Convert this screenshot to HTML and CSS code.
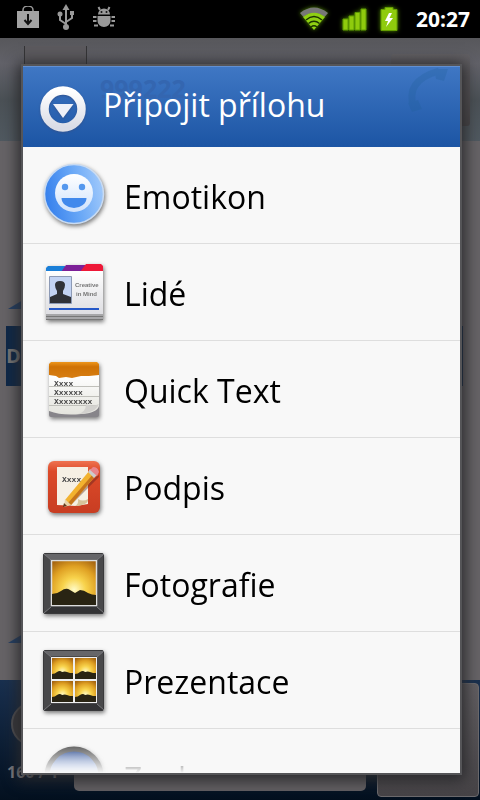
FILE: index.html
```html
<!DOCTYPE html>
<html lang="cs">
<head>
<meta charset="utf-8">
<meta name="viewport" content="width=device-width, initial-scale=1">
<title>Připojit přílohu</title>
<link rel="stylesheet" href="styles.css">
</head>
<body>
<header class="status">
  <div class="status-left">
    <svg width="24" height="24" viewBox="0 0 24 24" aria-hidden="true">
      <path d="M7 6V4a5 4 0 0 1 10 0v2" fill="none" stroke="#999" stroke-width="1.5"/>
      <path d="M1 5h22v17H1z" fill="#a3a3a3"/>
      <path d="M12 8v9M8.500 14l3.500 4 3.500-4" fill="none" stroke="#111" stroke-width="2"/>
    </svg>
    <svg width="24" height="28" viewBox="0 0 24 28" aria-hidden="true" fill="none" stroke="#999" stroke-width="2">
      <path d="M12 4v20M12 20l-6-4v-5M12 18l6-4V9"/>
      <path d="M12 0l3.500 6h-7z" fill="#999" stroke="none"/>
      <circle cx="12" cy="23" r="3" fill="#999" stroke="none"/>
      <circle cx="6" cy="10" r="2.500" fill="#999" stroke="none"/>
      <path d="M16 7h4v4h-4z" fill="#999" stroke="none"/>
    </svg>
    <svg width="24" height="24" viewBox="0 0 24 24" aria-hidden="true">
      <path d="M6 8.500a6 6 0 0 1 12 0zM5.500 10h13v5a6.500 6 0 0 1-13 0z" fill="#999"/>
      <path d="M8 4L6.500 1M16 4l1.500-3M1 11h3.500M1 15h3.500M2 19.500h4M19.500 11H23M19.500 15H23M18 19.500h4" stroke="#999" stroke-width="2"/>
      <circle cx="9.500" cy="6" r="1" fill="#111"/><circle cx="14.500" cy="6" r="1" fill="#111"/>
    </svg>
  </div>
  <div class="status-right">
    <svg width="32" height="26" viewBox="0 0 32 26" aria-hidden="true" fill="none">
      <path d="M2 7Q16-4 30 7L26.500 11Q16 3 5.500 11z" fill="#777"/>
      <path d="M5 11Q16 2.500 27 11L16 24z" fill="#8fd012"/>
      <path d="M8 14Q16 7 24 14M10.500 17.500q5.500-4.500 11 0M13 21q3-2.500 6 0" stroke="#1c3300" stroke-width="1.500"/>
    </svg>
    <svg width="26" height="26" viewBox="0 0 26 26" aria-hidden="true" fill="#8fcb0d" stroke="#5c9a00" stroke-width="1">
      <path d="M1 13h5v11H1zM7 10h5v14H7zM13 6.500h5V24h-5zM19 3h5v21h-5z"/>
    </svg>
    <svg class="battery" width="18" height="26" viewBox="0 0 18 26" aria-hidden="true">
      <path d="M5 1.500h8v2h4v21H1v-21h4z" fill="#8fcb0d" stroke="#639d00"/>
      <path d="M9 7L5 15h3l-2 6 7-9H9.500L12 7z" fill="#fff"/>
    </svg>
    <time class="clock">20:27</time>
  </div>
</header>
<main class="screen">
  <div class="chat">
    <div class="contact">
      <div class="avatar"></div>
      <div class="call"></div>
    </div>
    <div class="thread">
      <div class="bubble"><i class="tail"></i></div>
      <div class="day">D</div>
      <div class="bubble sent"><i class="tail"></i></div>
    </div>
    <div class="composer">
      <div class="tools">
        <div class="round"></div>
        <span class="count">160 / 1</span>
      </div>
      <div class="field"></div>
      <div class="send"></div>
    </div>
  </div>
  <section class="dialog" role="dialog" aria-labelledby="title">
    <div class="title">
      <svg class="title-icon" width="48" height="48" viewBox="0 0 48 48" aria-hidden="true">
        <defs><linearGradient id="ring" x2="0" y2="1"><stop stop-color="#fff"/><stop offset="1" stop-color="#d9dce6"/></linearGradient></defs>
        <circle cx="24" cy="24" r="18.500" fill="none" stroke="url(#ring)" stroke-width="8.500"/>
        <path d="M14 19h20.500L24 33z" fill="#eef1f8"/>
      </svg>
      <h1 id="title">Připojit přílohu</h1>
      <span class="ghost-number" aria-hidden="true">999222</span>
      <svg class="ghost-call" width="56" height="52" viewBox="0 0 56 52" aria-hidden="true"><path d="M14 41Q4 14 39 4" fill="none" stroke="#1f5e96" stroke-width="7"/><path d="M34 2l14 0-4 12-8-2zM8 36l10-3 4 9-10 3z" fill="#1f5e96"/></svg>
    </div>
    <ul class="list">
      <li><button class="item" type="button">
        <svg class="icon" viewBox="0 0 64 64" aria-hidden="true">
          <defs><linearGradient id="blue" x1="0" y1=".6" x2="1" y2=".4"><stop stop-color="#357fec"/><stop offset=".5" stop-color="#65a5f6"/><stop offset="1" stop-color="#a0c9fb"/></linearGradient>
          <linearGradient id="face" x2="0" y2="1"><stop stop-color="#fff"/><stop offset="1" stop-color="#cfe2fc"/></linearGradient></defs>
          <circle cx="32" cy="31" r="29.500" fill="url(#blue)" stroke="#c9dbf2" stroke-width="1.500"/>
          <circle cx="32" cy="30" r="19" fill="url(#face)"/>
          <circle cx="23" cy="24" r="3.200" fill="#5598ee"/><circle cx="40" cy="24" r="3.200" fill="#5598ee"/>
          <path d="M19.500 35h25a12.500 10 0 0 1-25 0z" fill="#4189ec"/>
        </svg><span>Emotikon</span></button></li>
      <li><button class="item" type="button">
        <svg class="icon" viewBox="0 0 64 64" aria-hidden="true">
          <defs><linearGradient id="card" x2="0" y2="1"><stop stop-color="#fff"/><stop offset="1" stop-color="#dedee2"/></linearGradient></defs>
          <path d="M4 11V8l2-2h17v6H4z" fill="#1a7fd8"/><path d="M19 12l5-7h20v7z" fill="#7d2098"/><path d="M38 12l6-8h15l2 2v6z" fill="#ee1838"/>
          <path d="M4 11h57v49H4z" fill="#a6a6a8"/><path d="M4 56.500h57M4 59.500h57" stroke="#777" />
          <path d="M4 11h57v43H4z" fill="url(#card)"/>
          <path d="M7.500 16.500h22v27h-22z" fill="#c3d3f3" stroke="#8d9ab5"/>
          <path d="M8 43v-6l7-3v-3q-2-3-2-6 0-4 5-4t5 4q0 3-2 6v3l8 3v6z" fill="#303238"/>
          <path d="M7 49h50" stroke="#2558c8" stroke-width="2"/>
          <text class="tiny-sans" x="33" y="27">Creative</text><text class="tiny-sans" x="34" y="36">in Mind</text>
        </svg><span>Lidé</span></button></li>
      <li><button class="item" type="button">
        <svg class="icon" viewBox="0 0 64 64" aria-hidden="true">
          <defs><linearGradient id="orange" x2="0" y2="1"><stop stop-color="#ed961c"/><stop offset=".3" stop-color="#cf7205"/><stop offset="1" stop-color="#d77e13"/></linearGradient>
          <linearGradient id="page" x2="0" y2="1"><stop stop-color="#fff"/><stop offset="1" stop-color="#e4e4dd"/></linearGradient></defs>
          <rect x="7" y="12" width="50" height="48" rx="2" fill="#87858a"/>
          <path d="M7 18h50v31q-2 7-18 8Q20 59 7 54z" fill="url(#page)"/>
          <path d="M7 18V7l2-2h46l2 2v11l-10 1-8 0-9 2-6-1-7 1-3-2z" fill="url(#orange)"/>
          <path d="M7 29.500h50M7 39.500h50M7 48.500h48" stroke="#c0c0ba"/>
          <path d="M36 57q8-2 8-10 6 3 13 0-3 9-21 10z" fill="#d2d1ce"/>
          <text class="tiny-serif" x="12" y="29">Xxxx</text><text class="tiny-serif" x="12" y="38">Xxxxxx</text><text class="tiny-serif" x="12" y="47">Xxxxxxxx</text>
        </svg><span>Quick Text</span></button></li>
      <li><button class="item" type="button">
        <svg class="icon" viewBox="0 0 64 64" aria-hidden="true">
          <defs><linearGradient id="red" x2="0" y2="1"><stop stop-color="#ef7350"/><stop offset=".2" stop-color="#dc4a29"/><stop offset="1" stop-color="#c83d22"/></linearGradient></defs>
          <rect x="6" y="7" width="52" height="52" rx="6" fill="url(#red)"/>
          <path d="M15 13h31v37l-12 2-19-1z" fill="#f6f0e4"/><path d="M33 52q4-2 3-7 5 3 10 0 1 6-13 7z" fill="#d7c49a"/>
          <path d="M24 50L54 23l3-2v2L28 52z" fill="#56201b" opacity=".4"/>
          <text class="tiny-serif" x="20" y="28">Xxxx</text>
          <path d="M23 46l25-30 6 5-25 30z" fill="#f2b22f"/><path d="M26 49l26-30 2 2-25 30z" fill="#c6751c"/>
          <path d="M23 45l6 6-7 2z" fill="#e9d2a6"/><path d="M22 49l3 3-4 1z" fill="#61391e"/>
          <path d="M46 18l2-3 7 6-3 3z" fill="#ccc"/><path d="M48 16l3-3q5 0 6 5l-2 4z" fill="#e9868c"/>
        </svg><span>Podpis</span></button></li>
      <li><button class="item" type="button">
        <svg class="icon" viewBox="0 0 64 64" aria-hidden="true">
          <defs><radialGradient id="sun" cx=".5" cy=".65" r=".75"><stop stop-color="#fffbc8"/><stop offset=".35" stop-color="#f8d34c"/><stop offset=".7" stop-color="#dfa023"/><stop offset="1" stop-color="#a76611"/></radialGradient>
          <g id="frame"><rect x="1.500" y="2.500" width="60" height="60" rx="1.500" fill="#48484a" stroke="#39393b"/>
          <path d="M2 3h60l-6 5H8z" fill="#666669"/><path d="M2 62l7-6h46l7 6z" fill="#333335"/><path d="M2 3l7 6M62 3l-7 6M2 62l7-6M62 62l-7-6" stroke="#77777b"/></g></defs>
          <use href="#frame"/>
          <rect x="9.500" y="9.500" width="45" height="45" fill="url(#sun)" stroke="#ddd" stroke-width="1.500"/>
          <path d="M10 43q5 0 9-3 5-4 9-1l5 3 5-3q4 0 8 3 4 2 8 2v10H10z" fill="#292413"/>
        </svg><span>Fotografie</span></button></li>
      <li><button class="item" type="button">
        <svg class="icon" viewBox="0 0 64 64" aria-hidden="true">
          <defs><g id="view"><path d="M0 0h21v21H0z" fill="url(#sun)"/><path d="M0 16q3 0 5-2 3-2 5 0 3-1 5 0l3 1h3v6H0z" fill="#292413"/></g></defs>
          <use href="#frame"/>
          <path d="M9 9h46v46H9z" fill="#eee"/>
          <use href="#view" x="10" y="10"/><use href="#view" x="33" y="10"/><use href="#view" x="10" y="33"/><use href="#view" x="33" y="33"/>
        </svg><span>Prezentace</span></button></li>
      <li><button class="item" type="button">
        <svg class="icon" viewBox="0 0 64 64" aria-hidden="true">
          <defs><linearGradient id="lens" x2="0" y2="1"><stop stop-color="#1c3c80"/><stop offset=".4" stop-color="#a5c0f5"/><stop offset="1" stop-color="#375baa"/></linearGradient></defs>
          <circle cx="32" cy="31" r="27" fill="url(#lens)" stroke="#555" stroke-width="5"/>
        </svg><span>Zvuk</span></button></li>
    </ul>
  </section>
</main>
</body>
</html>
```
FILE: styles.css
```css
* {
  box-sizing: border-box;
}

body {
  margin: 0;
  height: 100vh;
  display: flex;
  flex-direction: column;
  overflow: hidden;
  background: #000;
  font-family: "Open Sans", "Noto Sans", sans-serif;
}

.status {
  height: 38px;
  flex: none;
  display: flex;
  justify-content: space-between;
  padding: 0 10px 0 16px;
}

.status-left,
.status-right {
  display: flex;
  align-items: center;
}

.status-left {
  gap: 14px;
  padding-bottom: 2px;
}

.status-right {
  gap: 12px;
}

.status-right svg {
  filter: drop-shadow(0 0 2px #4f8600);
}

.clock {
  margin-left: 6px;
  color: #fff;
  font-size: 21px;
  font-weight: 700;
}

.screen {
  flex: 1;
  min-height: 0;
  position: relative;
}

.chat {
  height: 100%;
  display: flex;
  flex-direction: column;
}

.contact {
  height: 103px;
  flex: none;
  display: flex;
  justify-content: space-between;
  padding: 8px 10px 15px 24px;
  background: linear-gradient(#57575b, #626269 25%, #4b5156 60%, #505960);
}

.avatar {
  width: 63px;
  border: solid #343436;
  border-width: 0 1px;
  background: #5c5a5e;
}

.call {
  width: 79px;
  margin-top: 8px;
  border-radius: 3px;
  background: linear-gradient(#626064, #484547);
}

.thread {
  flex: 1;
  display: flex;
  flex-direction: column;
  padding: 0 17px 0 6px;
  background: #666366;
}

.bubble {
  height: 185px;
  display: flex;
  align-items: flex-end;
  padding: 0 2px 17px;
}

.sent {
  flex: 1;
  padding-bottom: 37px;
}

.tail {
  border-left: 15px solid transparent;
  border-bottom: 9px solid #223f66;
}

.day {
  height: 60px;
  background: #0d2747;
  color: #777;
  font-size: 20px;
  font-weight: 700;
  line-height: 60px;
}

.composer {
  height: 120px;
  flex: none;
  display: flex;
  gap: 11px;
  padding: 3px 1px 3px 7px;
  background: linear-gradient(#19304f, #03101f);
}

.tools {
  width: 56px;
  padding-top: 19px;
}

.round {
  width: 44px;
  height: 44px;
  margin: 0 0 14px 4px;
  border: 2px solid #504f52;
  border-radius: 50%;
  background: #39383b;
}

.count {
  color: #7c7c80;
  font-size: 16px;
  font-weight: 700;
  line-height: 24px;
  white-space: nowrap;
}

.field {
  flex: 1;
  margin-bottom: 6px;
  border-radius: 5px;
  background: #625f62;
}

.send {
  width: 102px;
  border: 1px solid #6c6a6d;
  border-radius: 4px;
  background: linear-gradient(#625f62, #464346);
}

.dialog {
  position: absolute;
  inset: 26px 18px 25px 21px;
  display: flex;
  flex-direction: column;
  border: 2px solid #555558;
  background: #f8f8f8;
  box-shadow: 0 2px 14px 3px #28282b;
}

.title {
  height: 81px;
  flex: none;
  position: relative;
  display: flex;
  align-items: center;
  gap: 16px;
  padding: 0 16px;
  border-top: 1px solid #6290d2;
  background: linear-gradient(#3f77c4, #1c55a4);
}

.title-icon {
  flex: none;
  margin-top: 4px;
  filter: drop-shadow(0 1px 1px #315491);
}

h1 {
  position: relative;
  z-index: 1;
  margin: 0;
  padding-bottom: 4px;
  color: #fff;
  font-size: 32px;
  font-weight: 400;
  line-height: 44px;
  white-space: nowrap;
}

.ghost-number {
  position: absolute;
  left: 77px;
  top: 4px;
  color: #3466b0;
  font-size: 25px;
  font-weight: 700;
}

.ghost-call {
  position: absolute;
  right: 4px;
  top: 0;
  opacity: .25;
}

.list {
  flex: 1;
  min-height: 0;
  margin: 0;
  padding: 0;
  overflow: hidden;
  list-style: none;
  mask-image: linear-gradient(#000 calc(100% - 30px), transparent);
}

.item {
  width: 100%;
  height: 97px;
  display: flex;
  align-items: center;
  gap: 18px;
  padding: 0 19px;
  border: 0;
  border-bottom: 1px solid #dedede;
  background: none;
  color: #000;
  font: 400 32px/44px "Open Sans", "Noto Sans", sans-serif;
  text-align: left;
}

.item span {
  padding-top: 3px;
}

.icon {
  width: 64px;
  height: 64px;
  flex: none;
  overflow: visible;
  filter: drop-shadow(1px 2px 2px #777);
}

.tiny-sans {
  fill: #777;
  font: 700 6px "Liberation Sans", sans-serif;
}

.tiny-serif {
  fill: #444;
  font: 700 8px "Liberation Mono", monospace;
}
```
